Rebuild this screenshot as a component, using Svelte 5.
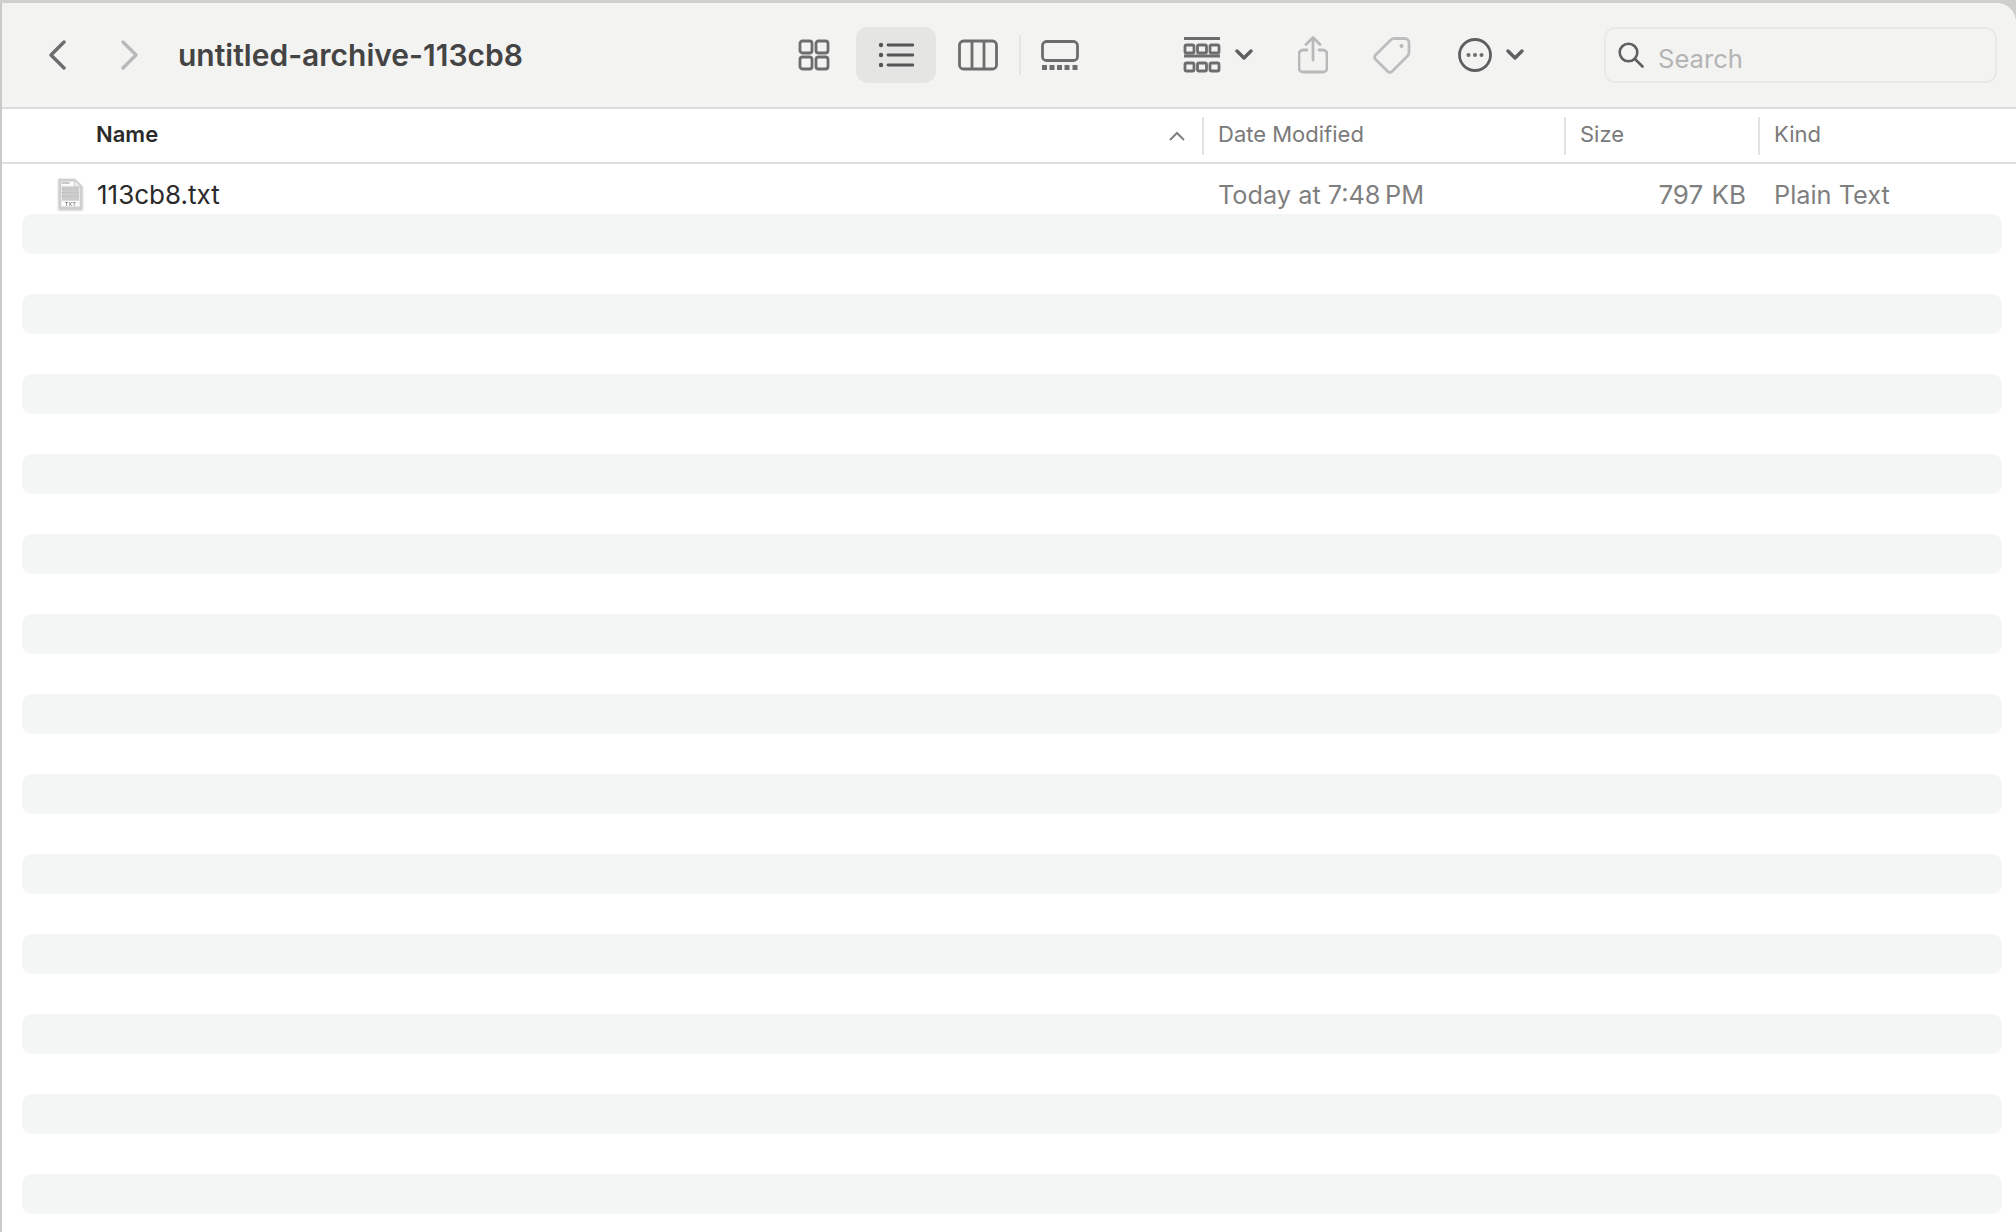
<script>
	const stripes = Array.from({ length: 13 }, (_, i) => i);
</script>

<div class="window">
	<header class="toolbar">
		<button class="nav back" aria-label="Back">
			<svg width="18" height="30" viewBox="0 0 18 30"><path d="M16 2 3 15l13 13" /></svg>
		</button>
		<button class="nav forward" aria-label="Forward">
			<svg width="18" height="30" viewBox="0 0 18 30"><path d="M2 2l13 13L2 28" /></svg>
		</button>
		<h1 class="title">untitled-archive-113cb8</h1>

		<div class="views">
			<button class="view" aria-label="Icons">
				<svg width="32" height="32" viewBox="0 0 32 32">
					<rect x="2" y="2" width="12" height="12" rx="2.5" />
					<rect x="18" y="2" width="12" height="12" rx="2.5" />
					<rect x="2" y="18" width="12" height="12" rx="2.5" />
					<rect x="18" y="18" width="12" height="12" rx="2.5" />
				</svg>
			</button>
			<button class="view selected" aria-label="List">
				<svg width="36" height="26" viewBox="0 0 36 26">
					<circle cx="3" cy="3" r="2.2" class="fill" />
					<circle cx="3" cy="13" r="2.2" class="fill" />
					<circle cx="3" cy="23" r="2.2" class="fill" />
					<path d="M10 3h25M10 13h25M10 23h25" />
				</svg>
			</button>
			<button class="view" aria-label="Columns">
				<svg width="40" height="32" viewBox="0 0 40 32">
					<rect x="1.5" y="2" width="37" height="28" rx="4" />
					<path d="M14 2v28M26 2v28" />
				</svg>
			</button>
			<span class="divider"></span>
			<button class="view gallery" aria-label="Gallery">
				<svg width="38" height="30" viewBox="0 0 38 30">
					<rect x="1.5" y="1.5" width="35" height="19" rx="4" />
					<path class="dots" d="M1 27.5h5M8.5 27.5h5M16 27.5h5M23.5 27.5h5M31.5 27.5h5" />
				</svg>
			</button>
		</div>

		<button class="tool group" aria-label="Group">
			<svg width="38" height="36" viewBox="0 0 38 36">
				<path d="M1 1.500h36M1 19h36" />
				<rect x="2" y="8" width="9" height="8" rx="1.5" />
				<rect x="14.500" y="8" width="9" height="8" rx="1.5" />
				<rect x="27" y="8" width="9" height="8" rx="1.5" />
				<rect x="2" y="26" width="9" height="8" rx="1.5" />
				<rect x="14.500" y="26" width="9" height="8" rx="1.5" />
				<rect x="27" y="26" width="9" height="8" rx="1.5" />
			</svg>
			<svg class="chev" width="18" height="12" viewBox="0 0 18 12"><path d="M2 2l7 7 7-7" /></svg>
		</button>

		<button class="tool share" aria-label="Share">
			<svg width="30" height="38" viewBox="0 0 30 38">
				<path d="M9 14H5a4 4 0 0 0-4 4v14a4 4 0 0 0 4 4h20a4 4 0 0 0 4-4V18a4 4 0 0 0-4-4h-4" />
				<path d="M15 24V2M8 8.500l7-7 7 7" />
			</svg>
		</button>

		<button class="tool tag" aria-label="Tag">
			<svg width="38" height="38" viewBox="0 0 38 38">
				<path d="M22 2.500h10a4 4 0 0 1 4 4v10a5 5 0 0 1-1.500 3.500L19 35.500a3 3 0 0 1-4.200 0L2.500 23.200a3 3 0 0 1 0-4.200L18 3.800A5 5 0 0 1 22 2.500z" />
				<circle cx="28.500" cy="10" r="2" class="fill" />
			</svg>
		</button>

		<button class="tool more" aria-label="More">
			<svg width="34" height="34" viewBox="0 0 34 34">
				<circle cx="17" cy="17" r="15.500" />
				<circle cx="10.500" cy="17" r="2" class="fill" />
				<circle cx="17" cy="17" r="2" class="fill" />
				<circle cx="23.500" cy="17" r="2" class="fill" />
			</svg>
			<svg class="chev" width="18" height="12" viewBox="0 0 18 12"><path d="M2 2l7 7 7-7" /></svg>
		</button>

		<div class="search">
			<svg width="26" height="26" viewBox="0 0 26 26">
				<circle cx="10.500" cy="10.500" r="8.800" />
				<path d="M17 17l7.500 7.500" />
			</svg>
			<span>Search</span>
		</div>
	</header>

	<div class="columns head">
		<div class="cell name">
			<span>Name</span>
			<svg class="sort" width="16" height="10" viewBox="0 0 16 10"><path d="M1 9l7-7 7 7" /></svg>
		</div>
		<div class="cell"><span>Date Modified</span></div>
		<div class="cell"><span>Size</span></div>
		<div class="cell"><span>Kind</span></div>
	</div>

	<div class="columns row">
		<div class="cell name">
			<svg class="file" width="25" height="32" viewBox="0 0 26 32">
				<path d="M2 1.500h15l7 7v22H2z" fill="#fbfbfb" stroke="#cfcfcf" />
				<path d="M17 1.500v7h7z" fill="#ededed" stroke="#c8c8c8" stroke-width="0.800" />
				<rect x="4" y="8" width="18" height="15" fill="#cdcdcd" />
				<path d="M4 4.500h8" stroke="#c4c4c4" stroke-width="2" />
				<path d="M4 10.500h18M4 14.500h18M4 18.500h18" stroke="#bdbdbd" stroke-width="1" stroke-dasharray="2 1" />
				<text x="13" y="29" text-anchor="middle">TXT</text>
			</svg>
			<span>113cb8.txt</span>
		</div>
		<div class="cell">Today at 7:48&#8201;PM</div>
		<div class="cell size">797 KB</div>
		<div class="cell">Plain Text</div>
	</div>

	<div class="stripes">
		{#each stripes as s (s)}
			<div class="stripe"></div>
		{/each}
	</div>
</div>

<style>
	:global(body) {
		margin: 0;
		background: #cfcfcb;
		overflow: hidden;
	}

	.window {
		box-sizing: border-box;
		width: 2016px;
		height: 1232px;
		margin-top: 3px;
		background: #fff;
		border-left: 2px solid #c9c9c9;
		border-top-right-radius: 20px;
		overflow: hidden;
		font-family: Inter, "Liberation Sans", sans-serif;
	}

	button {
		background: none;
		border: 0;
		padding: 0;
		display: flex;
		align-items: center;
		justify-content: center;
	}

	svg {
		fill: none;
		stroke: #6d6d6d;
		stroke-width: 2.800;
		flex: none;
	}

	svg .fill {
		fill: currentColor;
		stroke: none;
	}

	.toolbar {
		box-sizing: border-box;
		height: 106px;
		background: #f3f3f2;
		border-bottom: 2px solid #dcdcdc;
		display: flex;
		align-items: center;
	}

	.nav svg {
		stroke-linecap: round;
		stroke-linejoin: round;
		stroke-width: 3.400;
	}

	.back {
		margin-left: 46px;
	}

	.forward {
		margin-left: 55px;
	}

	.forward svg {
		stroke: #b9b9b9;
	}

	.title {
		margin: 0 0 0 39px;
		width: 595px;
		font-size: 30px;
		font-weight: 600;
		color: #444;
		white-space: nowrap;
	}

	.views {
		display: flex;
		align-items: center;
	}

	.view {
		width: 82px;
		height: 56px;
		color: #6d6d6d;
	}

	.view.selected {
		width: 80px;
		margin: 0 1px;
		background: #e5e5e4;
		border-radius: 12px;
		color: #555;
	}

	.view.selected svg {
		stroke: #555;
		stroke-linecap: round;
	}

	.view.gallery {
		width: 77px;
	}

	.dots {
		stroke-width: 5;
	}

	.divider {
		width: 2px;
		height: 40px;
		background: #e5e5e3;
	}

	.tool {
		color: #6d6d6d;
	}

	.chev {
		stroke: #5f5f5f;
		stroke-width: 3.400;
		stroke-linecap: round;
		stroke-linejoin: round;
		margin-left: 14px;
	}

	.group {
		margin-left: 85px;
	}

	.share {
		margin-left: 45px;
	}

	.share svg {
		stroke: #b9b9b9;
		stroke-linecap: round;
		stroke-linejoin: round;
	}

	.tag {
		margin-left: 45px;
		color: #b9b9b9;
	}

	.tag svg {
		stroke: #bdbdbd;
	}

	.more {
		margin-left: 47px;
	}

	.more svg:first-child {
		stroke: #5f5f5f;
	}

	.search {
		box-sizing: border-box;
		margin-left: auto;
		margin-right: 19px;
		width: 393px;
		height: 56px;
		border: 2px solid #e9e9e7;
		border-radius: 11px;
		display: flex;
		align-items: center;
		gap: 14px;
		padding-left: 12px;
		font-size: 25.600px;
		color: #b4b4b4;
	}

	.search span {
		padding-top: 6px;
	}

	.search svg {
		stroke: #5f5f5f;
		stroke-width: 2.600;
		stroke-linecap: round;
	}

	.columns {
		display: grid;
		grid-template-columns: 1200px 362px 194px 1fr;
		align-items: center;
	}

	.head {
		box-sizing: border-box;
		height: 55px;
		border-bottom: 2px solid #dfdfdf;
		font-size: 22px;
		color: #7a7a7a;
	}

	.head .cell {
		box-sizing: border-box;
		height: 38px;
		display: flex;
		align-items: center;
		padding-left: 14px;
		padding-bottom: 3px;
		border-left: 2px solid #e2e2e2;
	}

	.head .cell.name {
		border-left: 0;
		padding-left: 94px;
		padding-right: 17px;
		padding-bottom: 0;
		justify-content: space-between;
		color: #2a2a2a;
		font-weight: 600;
	}

	.head .cell.name span {
		padding-bottom: 3px;
	}

	.sort {
		stroke: #808080;
		stroke-width: 2;
	}

	.row {
		box-sizing: border-box;
		height: 50px;
		padding-top: 10px;
		font-size: 25.300px;
		color: #7f7f7f;
	}

	.row .cell {
		padding-left: 16px;
	}

	.row .cell.name {
		display: flex;
		align-items: center;
		gap: 14px;
		padding-left: 56px;
		color: #2a2a2a;
		font-size: 26px;
	}

	.row .cell.size {
		text-align: right;
		padding-right: 12px;
		font-size: 26px;
		word-spacing: 1px;
	}

	.file {
		stroke: none;
		filter: drop-shadow(0 1px 1px rgba(0, 0, 0, 0.25));
	}

	.file text {
		font-size: 5.500px;
		fill: #555;
		stroke: none;
		font-family: "Liberation Sans", sans-serif;
		letter-spacing: 0.400px;
	}

	.stripes {
		display: flex;
		flex-direction: column;
		gap: 40px;
		margin-left: 20px;
		margin-right: 14px;
	}

	.stripe {
		height: 40px;
		background: #f4f5f5;
		border-radius: 10px;
	}
</style>
